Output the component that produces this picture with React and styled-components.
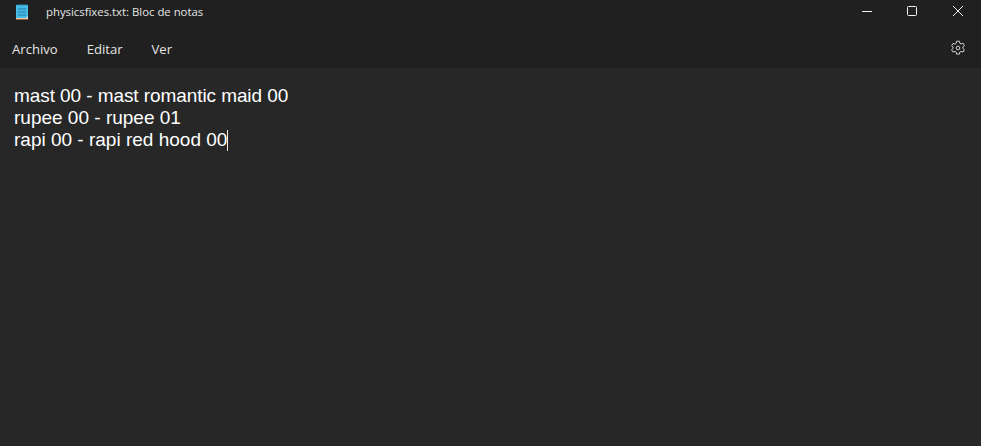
import React from 'react';
import styled, { createGlobalStyle } from 'styled-components';

const GlobalStyle = createGlobalStyle`
  html, body {
    margin: 0;
    height: 100%;
    background: #272727;
  }
  #root {
    height: 100%;
  }
`;

const Window = styled.div`
  display: flex;
  flex-direction: column;
  height: 446px;
  width: 981px;
  overflow: hidden;
  background: #272727;
  font-family: "Open Sans", "Noto Sans", sans-serif;
`;

const TitleBar = styled.header`
  display: flex;
  align-items: center;
  height: 22px;
  background: #202020;
  color: #e6e6e6;
`;

const AppIcon = styled.svg`
  width: 14px;
  height: 16px;
  margin: 2px 0 0 15px;
  flex: none;
`;

const Title = styled.span`
  margin-left: 17px;
  font-size: 11.35px;
  flex: 1;
`;

const WindowControls = styled.div`
  display: flex;
  align-items: center;
  gap: 34px;
  margin-right: 17px;
`;

const ControlIcon = styled.svg`
  width: 12px;
  height: 12px;
  display: block;
  overflow: visible;
  stroke: #f0f0f0;
  fill: none;
`;

const MenuBar = styled.nav`
  display: flex;
  align-items: center;
  height: 46px;
  padding: 8px 15px 0 12px;
  box-sizing: border-box;
  background: #202020;
`;

const MenuItem = styled.span`
  font-size: 13.1px;
  color: #e4e4e4;
  margin-right: 29px;
`;

const Settings = styled.svg`
  width: 16px;
  height: 16px;
  margin: 0 0 2px auto;
  stroke: #d0d0d0;
  fill: none;
`;

const Editor = styled.main`
  flex: 1;
  padding: 17px 14px;
  color: #ffffff;
  font-family: "Liberation Sans", Arial, sans-serif;
  font-size: 19px;
  line-height: 22px;
`;

const Line = styled.div`
  white-space: pre;
  letter-spacing: ${(props) => props.$tracking || 0}px;
`;

const Caret = styled.span`
  display: inline-block;
  width: 1px;
  height: 21px;
  background: #f0f0f0;
  vertical-align: -5px;
`;

export default function App() {
  return (
    <>
      <GlobalStyle />
      <Window>
        <TitleBar>
          <AppIcon viewBox="0 0 14 16">
            <rect x="1" y="1" width="12" height="13" fill="#48bce4" />
            <path d="M3 0v2M5 0v2M7 0v2M9 0v2M11 0v2" stroke="#2a8fb8" strokeWidth="1" />
            <path d="M3 5h8M3 8h8M3 11h8" stroke="#1c7ba6" strokeWidth="1" />
            <path d="M11 14l2-2v2z" fill="#d8eef6" />
            <rect x="1" y="14" width="12" height="1" fill="#e8c9a0" />
            <rect x="1" y="15" width="12" height="1" fill="#8a5a3a" />
          </AppIcon>
          <Title>physicsfixes.txt: Bloc de notas</Title>
          <WindowControls>
            <ControlIcon viewBox="0 0 12 12">
              <path d="M2 6.500h10" strokeWidth="1" />
            </ControlIcon>
            <ControlIcon viewBox="0 0 12 12">
              <rect x="1.500" y="1.500" width="9" height="9" rx="1" strokeWidth="1" />
            </ControlIcon>
            <ControlIcon viewBox="0 0 12 12">
              <path d="M1 1l10 10M11 1L1 11" strokeWidth="1" />
            </ControlIcon>
          </WindowControls>
        </TitleBar>
        <MenuBar>
          <MenuItem>Archivo</MenuItem>
          <MenuItem>Editar</MenuItem>
          <MenuItem>Ver</MenuItem>
          <Settings viewBox="0 0 16 16">
            <path
              d="M6.600 1.200h2.800l.4 2 1.300.7 1.900-.7 1.400 2.400-1.500 1.300v1.500l1.500 1.300-1.400 2.400-1.900-.7-1.300.7-.4 2H6.600l-.4-2-1.300-.7-1.900.7-1.400-2.400 1.500-1.300V7.100L1.600 5.800 3 3.400l1.900.7 1.300-.7z"
              strokeWidth="1"
            />
            <circle cx="8" cy="8" r="1.800" strokeWidth="1" />
          </Settings>
        </MenuBar>
        <Editor>
          <Line $tracking={-0.08}>mast 00 - mast romantic maid 00</Line>
          <Line>rupee 00 - rupee 01</Line>
          <Line>rapi 00 - rapi red hood 00<Caret /></Line>
        </Editor>
      </Window>
    </>
  );
}
